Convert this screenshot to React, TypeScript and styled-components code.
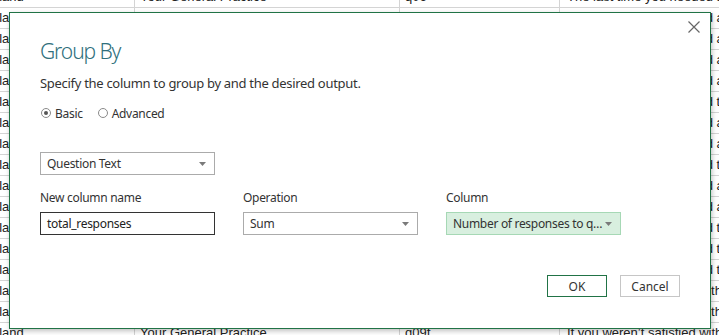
import React from "react";
import styled, { createGlobalStyle } from "styled-components";

const GlobalStyle = createGlobalStyle`
  html, body {
    margin: 0;
    padding: 0;
    background: #ffffff;
    overflow: hidden;
  }
`;

const rows: [string, string, string, string][] = [
  ["England", "Your General Practice", "q06", "The last time you needed an appointment"],
  ["England", "Your General Practice", "q06", "The last time you needed an appointment"],
  ["England", "Your General Practice", "q06", "The last time you needed an appointment"],
  ["England", "Your General Practice", "q06", "The last time you needed an appointment"],
  ["England", "Your General Practice", "q06", "The last time you needed an appointment"],
  ["England", "Your General Practice", "q07", "The last time you needed the help"],
  ["England", "Your General Practice", "q08", "The last time you needed an appointment"],
  ["England", "Your General Practice", "q08", "The last time you needed an appointment"],
  ["England", "Your General Practice", "q09", "The last time you needed the help"],
  ["England", "Your General Practice", "q09", "The last time you needed an appointment"],
  ["England", "Your General Practice", "q09", "The last time you needed an appointment"],
  ["England", "Your General Practice", "q09", "The last time you needed the help"],
  ["England", "Your General Practice", "q09", "The last time you needed the help"],
  ["England", "Your General Practice", "q09", "The last time you needed the help"],
  ["England", "Your General Practice", "q09f", "If you weren't satisfied with the"],
  ["England", "Your General Practice", "q09f", "If you weren't satisfied with the"],
  ["England", "Your General Practice", "q09f", "If you weren’t satisfied with the"],
];

const ArrowDown = () => (
  <svg width="7" height="4" viewBox="0 0 7 4">
    <path d="M0 0 L7 0 L3.5 4 Z" fill="#7a7a7a" />
  </svg>
);

export default function App() {
  return (
    <Sheet>
      <GlobalStyle />
      <Grid>
        {rows.map((r, i) => (
          <Row key={i}>
            {r.map((c, j) => (
              <Cell key={j}>{c}</Cell>
            ))}
          </Row>
        ))}
      </Grid>

      <Dialog>
        <Header>
          <Title>Group By</Title>
          <CloseButton aria-label="Close">
            <svg width="12" height="12" viewBox="0 0 12 12">
              <path d="M0.5 0.5 L11.5 11.5 M11.5 0.5 L0.5 11.5" stroke="#666" strokeWidth="1.2" />
            </svg>
          </CloseButton>
        </Header>
        <Subtitle>Specify the column to group by and the desired output.</Subtitle>
        <RadioRow>
          <RadioItem>
            <Radio checked />
            Basic
          </RadioItem>
          <RadioItem>
            <Radio />
            Advanced
          </RadioItem>
        </RadioRow>

        <Select width={175}>
          <SelectText>Question Text</SelectText>
          <ArrowDown />
        </Select>

        <Fields>
          <Label>New column name</Label>
          <Label>Operation</Label>
          <Label>Column</Label>
          <TextInput>total_responses</TextInput>
          <Select>
            <SelectText>Sum</SelectText>
            <ArrowDown />
          </Select>
          <Select highlighted>
            <SelectText>Number of responses to question</SelectText>
            <ArrowDown />
          </Select>
        </Fields>

        <Footer>
          <Button primary>OK</Button>
          <Button>Cancel</Button>
        </Footer>
      </Dialog>
    </Sheet>
  );
}

const Sheet = styled.div`
  position: relative;
  width: 719px;
  height: 335px;
  overflow: hidden;
  font-family: "Liberation Sans", Arial, sans-serif;
`;

const Grid = styled.div`
  margin-top: -13px;
  margin-left: -27px;
  display: flex;
  flex-direction: column;
`;

const Row = styled.div`
  display: grid;
  grid-template-columns: 162px 265px 160px 300px;
  height: 21px;
  border-bottom: 1px solid #d4d4d4;
  box-sizing: border-box;
`;

const Cell = styled.div`
  border-right: 1px solid #d4d4d4;
  padding: 0 5px;
  font-size: 13px;
  line-height: 20px;
  color: #222;
  white-space: nowrap;
  overflow: hidden;
  &:first-child {
    padding-left: 3px;
  }
  &:nth-child(4) {
    padding-left: 7px;
  }
`;

const Dialog = styled.div`
  position: absolute;
  left: 9px;
  top: 12px;
  width: 702px;
  height: 317px;
  box-sizing: border-box;
  background: #ffffff;
  border: 1px solid #217346;
  box-shadow: 1px 2px 5px rgba(0, 0, 0, 0.25);
  padding: 8px 30px 0 30px;
  display: flex;
  flex-direction: column;
  font-family: "Noto Sans", "Open Sans", sans-serif;
  letter-spacing: -0.3px;
  color: #333;
`;

const Header = styled.div`
  display: flex;
  justify-content: space-between;
  align-items: flex-start;
  margin-right: -20px;
`;

const Title = styled.h1`
  margin: 16px 0 0 0;
  font-size: 21px;
  line-height: 28px;
  font-weight: 300;
  letter-spacing: -1.1px;
  color: #2f6f7c;
`;

const CloseButton = styled.button`
  width: 12px;
  height: 12px;
  padding: 0;
  border: none;
  background: none;
  display: flex;
`;

const Subtitle = styled.p`
  margin: 8px 0 0 0;
  font-size: 13px;
  line-height: 20px;
  color: #333;
`;

const RadioRow = styled.div`
  display: flex;
  gap: 14px;
  margin-top: 11px;
  height: 18px;
  align-items: center;
`;

const RadioItem = styled.label`
  display: flex;
  align-items: center;
  gap: 4px;
  font-size: 12px;
  color: #333;
`;

const Radio = styled.span<{ checked?: boolean }>`
  width: 10px;
  height: 10px;
  margin-left: 1px;
  box-sizing: border-box;
  border-radius: 50%;
  border: 1px solid #8a8a8a;
  display: flex;
  align-items: center;
  justify-content: center;
  &::after {
    content: "";
    width: 4px;
    height: 4px;
    border-radius: 50%;
    background: ${(p) => (p.checked ? "#555" : "transparent")};
  }
`;

const Select = styled.div<{ width?: number; highlighted?: boolean }>`
  box-sizing: border-box;
  width: ${(p) => (p.width ? `${p.width}px` : "auto")};
  height: 23px;
  margin-top: ${(p) => (p.width ? "30px" : "0")};
  display: flex;
  align-items: center;
  padding: 0 8px 0 6px;
  border: 1px solid ${(p) => (p.highlighted ? "#a6d8b5" : "#ababab")};
  background: ${(p) => (p.highlighted ? "#d8efdf" : "#ffffff")};
`;

const SelectText = styled.span`
  flex: 1;
  min-width: 0;
  margin-right: -3px;
  font-size: 12px;
  color: #333;
  white-space: nowrap;
  overflow: hidden;
  text-overflow: ellipsis;
`;

const Fields = styled.div`
  display: grid;
  grid-template-columns: repeat(3, 175px);
  column-gap: 28px;
  row-gap: 5px;
  margin-top: 14px;
`;

const Label = styled.div`
  font-size: 12px;
  line-height: 18px;
  color: #333;
`;

const TextInput = styled.div`
  box-sizing: border-box;
  height: 23px;
  border: 1px solid #333;
  padding: 0 6px;
  font-size: 12px;
  line-height: 21px;
  color: #222;
`;

const Footer = styled.div`
  display: flex;
  justify-content: flex-end;
  gap: 13px;
  margin-top: 40px;
`;

const Button = styled.button<{ primary?: boolean }>`
  width: 60px;
  height: 22px;
  padding: 0;
  box-sizing: border-box;
  background: #ffffff;
  border: 1px solid ${(p) => (p.primary ? "#217346" : "#c6c6c6")};
  font-family: "Noto Sans", "Open Sans", sans-serif;
  font-size: 12px;
  color: #333;
`;
